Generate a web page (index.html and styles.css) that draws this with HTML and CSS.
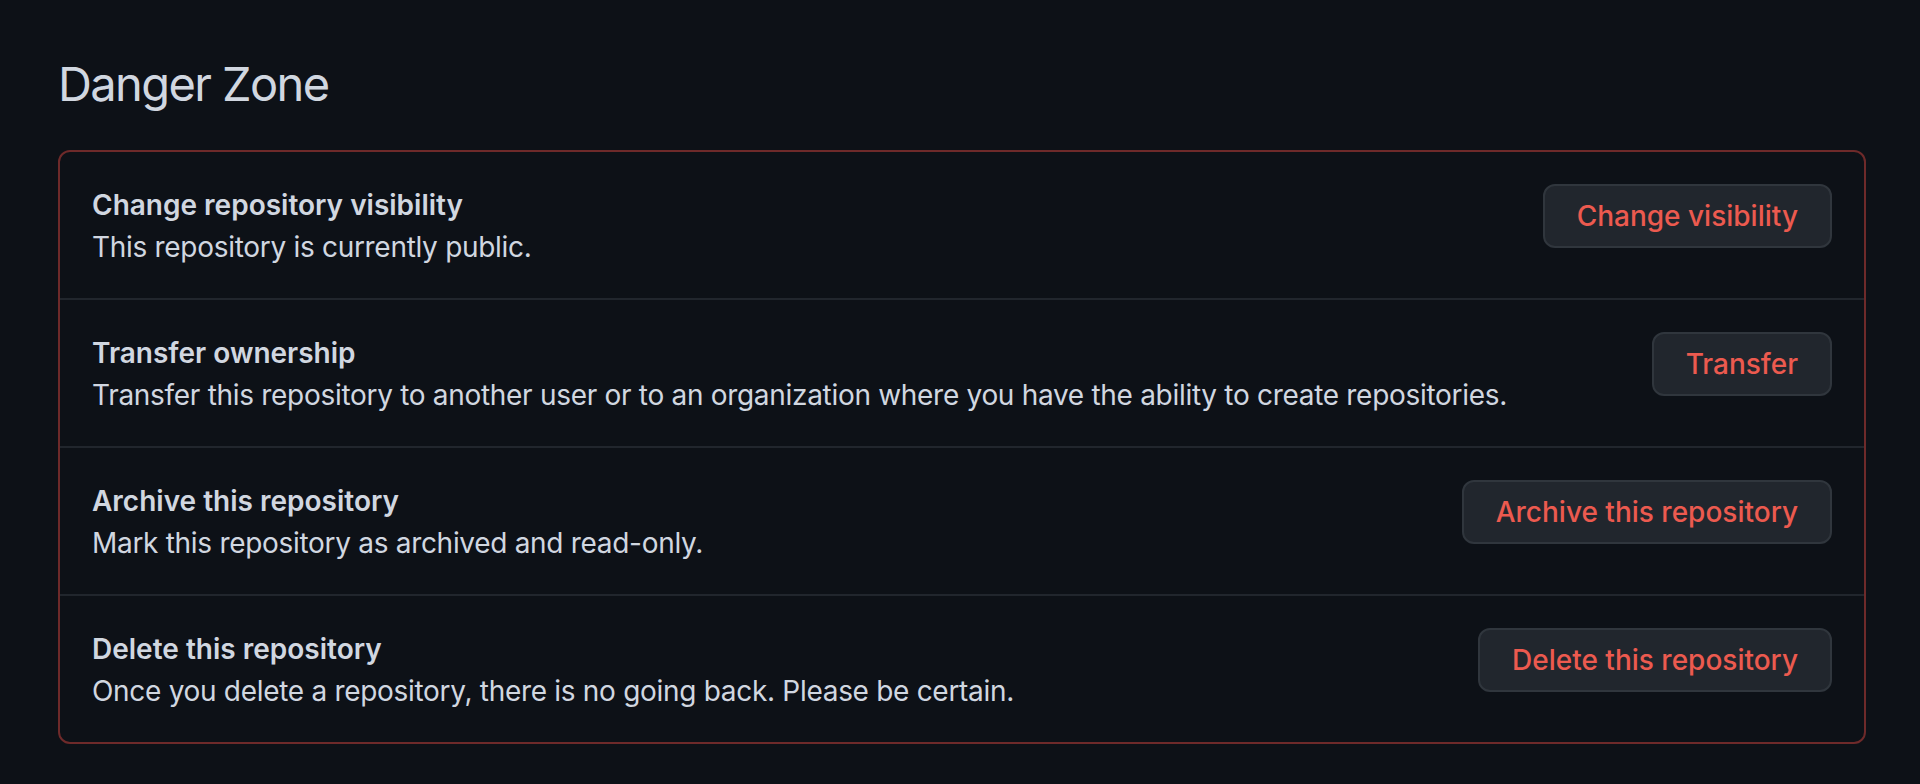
FILE: index.html
```html
<!DOCTYPE html>
<html lang="en">
<head>
    <meta charset="UTF-8">
    <meta name="viewport" content="width=device-width, initial-scale=1.0">
    <title>Danger Zone</title>
    <link rel="stylesheet" href="styles.css">
</head>
<body>
<div class="settings">
    <h2 class="subhead">Danger Zone</h2>

    <div class="danger-box">
        <!-- Visibility -->
        <div class="danger-row">
            <div class="danger-info">
                <div class="danger-title">Change repository visibility</div>
                <div class="danger-desc">This repository is currently public.</div>
            </div>
            <button type="button" class="btn-danger">Change visibility</button>
        </div>

        <!-- Transfer -->
        <div class="danger-row">
            <div class="danger-info">
                <div class="danger-title">Transfer ownership</div>
                <div class="danger-desc">Transfer this repository to another user or to an organization where you have the ability to create repositories.</div>
            </div>
            <button type="button" class="btn-danger">Transfer</button>
        </div>

        <!-- Archive -->
        <div class="danger-row">
            <div class="danger-info">
                <div class="danger-title">Archive this repository</div>
                <div class="danger-desc">Mark this repository as archived and read-only.</div>
            </div>
            <button type="button" class="btn-danger">Archive this repository</button>
        </div>

        <!-- Delete -->
        <div class="danger-row">
            <div class="danger-info">
                <div class="danger-title">Delete this repository</div>
                <div class="danger-desc">Once you delete a repository, there is no going back. Please be certain.</div>
            </div>
            <button type="button" class="btn-danger">Delete this repository</button>
        </div>
    </div>
</div>
</body>
</html>
```

FILE: styles.css
```css
body {
    margin: 0;
    background-color: #0d1117;
    color: #d1d7e0;
    font-family: Inter, "Noto Sans", "Liberation Sans", sans-serif;
}

.settings {
    width: 1808px;
    margin-left: 58px;
    padding-top: 54px;
}

.subhead {
    margin: 0 0 36px;
    font-size: 47px;
    font-weight: 400;
    line-height: 60px;
    letter-spacing: -1.6px;
    color: #d1d7e0;
}

.danger-box {
    border: 2px solid #6e2a2a;
    border-radius: 12px;
}

.danger-row {
    display: flex;
    align-items: flex-start;
    justify-content: space-between;
    padding: 32px 32px 30px;
}

.danger-row + .danger-row {
    border-top: 2px solid #21262d;
}

.danger-title {
    font-size: 28px;
    font-weight: 600;
    line-height: 42px;
}

.danger-desc {
    font-size: 28px;
    line-height: 42px;
    letter-spacing: -0.3px;
}

.btn-danger {
    flex-shrink: 0;
    height: 64px;
    padding: 0 32px;
    background-color: #21262d;
    color: #ec5a4f;
    border: 2px solid #30363d;
    border-radius: 12px;
    font-family: inherit;
    font-size: 28px;
    font-weight: 500;
    cursor: pointer;
}

.btn-danger:hover {
    background-color: #da3633;
    color: #ffffff;
}
```
